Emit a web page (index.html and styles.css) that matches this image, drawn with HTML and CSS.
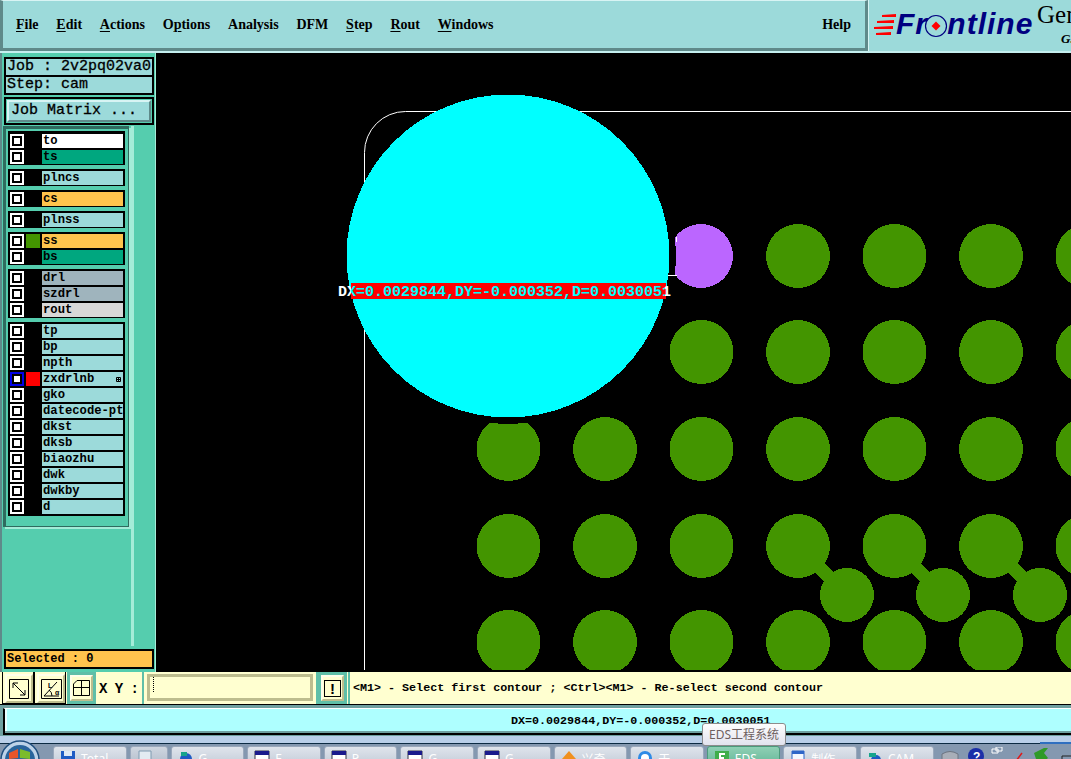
FILE: index.html
```html
<!DOCTYPE html>
<html lang="en">
<head>
<meta charset="utf-8">
<title>Frontline Genesis</title>
<link rel="stylesheet" href="styles.css">
</head>
<body>
<div class="app">
  <header class="topbar">
    <nav class="menubar">
      <span><u>F</u>ile</span><span><u>E</u>dit</span><span><u>A</u>ctions</span><span>O<u>p</u>tions</span><span>Analysis</span><span>DFM</span><span><u>S</u>tep</span><span><u>R</u>out</span><span><u>W</u>indows</span>
      <span class="help">Help</span>
    </nav>
    <div class="logo">
      <svg class="logo-lines" width="22" height="24" viewBox="0 0 22 24"><path d="M8 2 22 1V4L8 4ZM3 8 20 7V10L3 10ZM0 14 19 13V16L0 16ZM2 20 17 19V22L2 22Z" fill="#f00"/></svg>
      <span class="logo-word">Frontline</span>
      <svg class="logo-mark" width="26" height="26" viewBox="0 0 26 26"><circle cx="13" cy="13" r="10.5" fill="#9cdada" stroke="#000080" stroke-width="1.200"/><path d="M13 8.500 17.500 13 13 17.500 8.500 13Z" fill="#f00"/></svg>
      <div class="logo-side"><span class="gen">Gen</span><span class="gsub">G.</span></div>
    </div>
  </header>

  <main class="main">
    <aside class="sidebar">
      <div class="info">Job : 2v2pq02va0</div>
      <div class="info step">Step: cam</div>
      <div class="matrix"><div class="matrix-btn">Job Matrix ...</div></div>
      <div class="layers-area">
        <div class="layer-panel">
          <div class="group first">
            <div class="row"><i class="chk"><b></b></i><i class="sw"></i><span class="name c-white">to</span></div>
            <div class="row"><i class="chk"><b></b></i><i class="sw"></i><span class="name c-green">ts</span></div>
          </div>
          <div class="group single"><div class="row"><i class="chk"><b></b></i><i class="sw"></i><span class="name">plncs</span></div></div>
          <div class="group single"><div class="row"><i class="chk"><b></b></i><i class="sw"></i><span class="name c-orange">cs</span></div></div>
          <div class="group single"><div class="row"><i class="chk"><b></b></i><i class="sw"></i><span class="name">plnss</span></div></div>
          <div class="group single">
            <div class="row"><i class="chk"><b></b></i><i class="sw sw-green"></i><span class="name c-orange">ss</span></div>
            <div class="row"><i class="chk"><b></b></i><i class="sw"></i><span class="name c-green">bs</span></div>
          </div>
          <div class="group single">
            <div class="row"><i class="chk"><b></b></i><i class="sw"></i><span class="name c-slate">drl</span></div>
            <div class="row"><i class="chk"><b></b></i><i class="sw"></i><span class="name c-slate">szdrl</span></div>
            <div class="row"><i class="chk"><b></b></i><i class="sw"></i><span class="name c-grey">rout</span></div>
          </div>
          <div class="group">
            <div class="row"><i class="chk"><b></b></i><i class="sw"></i><span class="name">tp</span></div>
            <div class="row"><i class="chk"><b></b></i><i class="sw"></i><span class="name">bp</span></div>
            <div class="row"><i class="chk"><b></b></i><i class="sw"></i><span class="name">npth</span></div>
            <div class="row"><i class="chk chk-on"><b></b></i><i class="sw sw-red"></i><span class="name">zxdrlnb<svg class="attr" width="5" height="5" viewBox="0 0 5 5"><path d="M.5.500H4.500V4.500H.5ZM2.500.500V4.500M.5 2.500H4.500" fill="none" stroke="#000" stroke-width="1"/></svg></span></div>
            <div class="row"><i class="chk"><b></b></i><i class="sw"></i><span class="name">gko</span></div>
            <div class="row"><i class="chk"><b></b></i><i class="sw"></i><span class="name">datecode-pte</span></div>
            <div class="row"><i class="chk"><b></b></i><i class="sw"></i><span class="name">dkst</span></div>
            <div class="row"><i class="chk"><b></b></i><i class="sw"></i><span class="name">dksb</span></div>
            <div class="row"><i class="chk"><b></b></i><i class="sw"></i><span class="name">biaozhu</span></div>
            <div class="row"><i class="chk"><b></b></i><i class="sw"></i><span class="name">dwk</span></div>
            <div class="row"><i class="chk"><b></b></i><i class="sw"></i><span class="name">dwkby</span></div>
            <div class="row"><i class="chk"><b></b></i><i class="sw"></i><span class="name">d</span></div>
          </div>
        </div>
        <div class="trough"></div>
      </div>
      <div class="selected">Selected : 0</div>
    </aside>

    <svg class="canvas" width="915" height="618" viewBox="156 53 915 618" shape-rendering="crispEdges">
      <defs>
        <linearGradient id="readout" gradientUnits="userSpaceOnUse" x1="338" y1="0" x2="670" y2="0">
          <stop offset="0.039" stop-color="#fff"/><stop offset="0.04" stop-color="#0ff"/><stop offset="0.985" stop-color="#0ff"/><stop offset="0.986" stop-color="#fff"/>
        </linearGradient>
      </defs>
      <g fill="#439500" stroke="#439500">
        <path d="M798 546 847 595M894 546 943 595M991 546 1040 595" stroke-width="14" fill="none"/>
      </g>
      <g fill="#439500">
        <circle cx="798" cy="256" r="32"/><circle cx="894.500" cy="256" r="32"/><circle cx="991" cy="256" r="32"/><circle cx="1087.500" cy="256" r="32"/>
        <circle cx="701.500" cy="352" r="32"/><circle cx="798" cy="352" r="32"/><circle cx="894.500" cy="352" r="32"/><circle cx="991" cy="352" r="32"/><circle cx="1087.500" cy="352" r="32"/>
        <circle cx="508.500" cy="449" r="32"/><circle cx="605" cy="449" r="32"/><circle cx="701.500" cy="449" r="32"/><circle cx="798" cy="449" r="32"/><circle cx="894.500" cy="449" r="32"/><circle cx="991" cy="449" r="32"/><circle cx="1087.500" cy="449" r="32"/>
        <circle cx="508.500" cy="546" r="32"/><circle cx="605" cy="546" r="32"/><circle cx="701.500" cy="546" r="32"/><circle cx="798" cy="546" r="32"/><circle cx="894.500" cy="546" r="32"/><circle cx="991" cy="546" r="32"/><circle cx="1087.500" cy="546" r="32"/>
        <circle cx="508.500" cy="642" r="32"/><circle cx="605" cy="642" r="32"/><circle cx="701.500" cy="642" r="32"/><circle cx="798" cy="642" r="32"/><circle cx="894.500" cy="642" r="32"/><circle cx="991" cy="642" r="32"/><circle cx="1087.500" cy="642" r="32"/>
        <circle cx="847" cy="595" r="27"/><circle cx="943" cy="595" r="27"/><circle cx="1040" cy="595" r="27"/>
      </g>
      <circle cx="701" cy="256" r="32" fill="#bb66ff"/>
      <circle cx="508" cy="256" r="168" fill="#000"/>
      <path d="M1071 111.500H405.500A41 41 0 0 0 364.500 152.500V671" fill="none" stroke="#fff" stroke-width="1" shape-rendering="auto"/>
      <path d="M668 275.500H677M676.500 237V242" stroke="#fff" stroke-width="1"/>
      <circle cx="508" cy="256" r="161.500" fill="#0ff"/>
      <rect x="351" y="283" width="315" height="16" fill="#f00"/>
      <text class="readout" x="338" y="296" fill="url(#readout)" shape-rendering="auto">DX=0.0029844,DY=-0.000352,D=0.0030051</text>
      <rect x="156" y="670" width="915" height="2" fill="#000"/>
    </svg>
  </main>

  <section class="toolbar">
    <div class="tool plain"><div class="bevel">
      <svg width="20" height="20" viewBox="0 0 20 20"><path d="M.5.500H19.500V19.500H.5ZM4 4 16 16M4 4H9M4 4V9M16 16H11M16 16V11" fill="none" stroke="#000"/></svg>
    </div></div>
    <div class="tool plain"><div class="bevel">
      <svg width="21" height="20" viewBox="0 0 21 20"><path d="M.5.500H20.500V19.500H.5ZM16 3 3 17H18M11 17Q11 13 8 11" fill="none" stroke="#000"/><text class="glyph" x="14" y="16">α</text><text class="glyph" x="7" y="9">L</text></svg>
    </div></div>
    <div class="tool framed"><div class="bevel">
      <svg width="17" height="16" viewBox="0 0 17 16"><path d="M.5 15.500V4L4 .5H16.500V15.500ZM.5 7.500H16.500M8.500.5V15.500" fill="none" stroke="#000"/></svg>
    </div></div>
    <label class="xy-label">X Y :</label>
    <div class="xy-field"><div class="xy-inner"><span class="caret"></span></div></div>
    <div class="tool framed warn"><div class="bevel"><span class="bang">!</span></div></div>
    <div class="prompt">&lt;M1&gt; - Select first contour ; &lt;Ctrl&gt;&lt;M1&gt; - Re-select second contour</div>
  </section>

  <section class="status"><div class="status-inner">DX=0.0029844,DY=-0.000352,D=0.0030051</div></section>
  <div class="glass"></div>

  <footer class="taskbar">
    <div class="task"><svg class="ticon" width="16" height="16" viewBox="0 0 16 16"><path d="M1 1H15V15H1Z" fill="#1f5bc4"/><path d="M4 1H12V6H4Z" fill="#dfe8f5"/></svg><span>Total</span></div>
    <div class="task narrow"><svg class="ticon" width="16" height="16" viewBox="0 0 16 16"><path d="M2 1H14V15H2Z" fill="#e3ebf2" stroke="#7f9ab0"/></svg></div>
    <div class="task"><svg class="ticon" width="16" height="16" viewBox="0 0 16 16"><circle cx="8" cy="9" r="6" fill="#1f5bc4"/><path d="M3 2H9V6H3Z" fill="#17a58c"/></svg><span>G</span></div>
    <div class="task"><svg class="ticon" width="16" height="16" viewBox="0 0 16 16"><path d="M1 1H15V15H1Z" fill="#fff" stroke="#334"/><path d="M1 1H15V5H1Z" fill="#1a1a8c"/></svg><span>F</span></div>
    <div class="task"><svg class="ticon" width="16" height="16" viewBox="0 0 16 16"><path d="M1 1H15V15H1Z" fill="#fff" stroke="#334"/><path d="M1 1H15V5H1Z" fill="#1a1a8c"/></svg><span>P</span></div>
    <div class="task"><svg class="ticon" width="16" height="16" viewBox="0 0 16 16"><path d="M1 1H15V15H1Z" fill="#fff" stroke="#334"/><path d="M1 1H15V5H1Z" fill="#1a1a8c"/></svg><span>G</span></div>
    <div class="task"><svg class="ticon" width="16" height="16" viewBox="0 0 16 16"><path d="M1 1H15V15H1Z" fill="#fff" stroke="#334"/><path d="M1 1H15V5H1Z" fill="#1a1a8c"/></svg><span>G</span></div>
    <div class="task"><svg class="ticon" width="16" height="16" viewBox="0 0 16 16"><path d="M8 1 15 9V15H1V9Z" fill="#f0901e"/></svg><span>兴奇</span></div>
    <div class="task"><svg class="ticon" width="16" height="16" viewBox="0 0 16 16"><circle cx="8" cy="8" r="7" fill="#2f8ae6"/><circle cx="8" cy="8" r="4" fill="#fff"/></svg><span>于</span></div>
    <div class="task active"><svg class="ticon" width="16" height="16" viewBox="0 0 16 16"><path d="M1 1H15V15H1Z" fill="#3fae4a"/><path d="M5 3H11V5H7V7H10V9H7V13H5Z" fill="#fff"/></svg><span>EDS</span></div>
    <div class="task"><svg class="ticon" width="16" height="16" viewBox="0 0 16 16"><path d="M2 1H14V15H2Z" fill="#f4f8ff" stroke="#2f66c8"/><path d="M2 1H14V4H2Z" fill="#2f66c8"/></svg><span>制作</span></div>
    <div class="task"><svg class="ticon" width="16" height="16" viewBox="0 0 16 16"><circle cx="9" cy="10" r="5" fill="#1f5bc4"/><path d="M2 3H9V7H2Z" fill="#17a58c"/></svg><span>CAM</span></div>
    <div class="tray">
      <svg width="138" height="16" viewBox="0 0 138 16"><path d="M8 7Q16 2 24 7V16H8Z" fill="#a8aeb8" stroke="#6c7480"/><circle cx="42" cy="9" r="8" fill="#1b2fa8"/><text class="tray-q" x="39" y="14">?</text><path d="M58 2H64V6H58ZM62 0H68V4H62Z" fill="none" stroke="#fff"/><path d="M82 14 88 6" stroke="#e01818" stroke-width="1.500"/><path d="M100 6 110 1 114 1 110 6 114 11 108 16 102 12Z" fill="#2f9a28"/><path d="M128 9H138V16H128Z" fill="none" stroke="#222"/></svg>
    </div>
  </footer>

  <svg class="orb" width="40" height="20" viewBox="0 0 40 20"><circle cx="20" cy="21" r="19" fill="#bcd2e8" stroke="#1f4f7f" stroke-width="1.500"/><circle cx="20" cy="21" r="15" fill="#28649c"/><path d="M9 14 18 10V19L9 20Z" fill="#e8552a"/><path d="M20 10 30 13V20L20 19Z" fill="#7cbc2c"/></svg>
  <div class="taskstrip"></div>
  <div class="tooltip">EDS工程系统</div>
</div>
</body>
</html>
```

FILE: styles.css
```css
* { box-sizing: border-box; }
html, body { margin: 0; padding: 0; height: 100%; overflow: hidden; background: #000; }
.app {
  position: relative;
  width: 1071px;
  height: 759px;
  overflow: hidden;
  display: flex;
  flex-direction: column;
  font-family: "Liberation Mono", monospace;
  font-weight: bold;
  color: #000;
}

/* top bar */
.topbar { height: 53px; display: flex; flex: none; background: #c4eeee; padding-bottom: 2px; }
.menubar {
  width: 868px;
  display: flex;
  align-items: center;
  gap: 17.800px;
  padding: 0 14px 0 13px;
  background: #9cdada;
  border-top: 1px solid #d8f4f4;
  border-left: 3px solid #5f8a8a;
  border-bottom: 3px solid #5f8a8a;
  border-right: 3px solid #5f8a8a;
  font-family: "Liberation Serif", serif;
  font-size: 14px;
}
.menubar u { text-decoration-thickness: 1px; text-underline-offset: 2px; }
.help { margin-left: auto; }
.logo {
  position: relative;
  flex: 1;
  display: flex;
  align-items: flex-start;
  background: #9cdada;
  border-left: 1px solid #d8f4f4;
  overflow: hidden;
}
.logo-lines { flex: none; margin: 13px 0 0 5px; }
.logo-word {
  margin: 7px 0 0 0;
  font-family: "Liberation Sans", sans-serif;
  font-style: italic;
  font-size: 30px;
  line-height: 34px;
  letter-spacing: 1px;
  color: #000080;
}
.logo-mark { position: absolute; left: 54px; top: 13px; }
.logo-side {
  position: absolute;
  left: 168px;
  top: 1px;
  font-family: "Liberation Serif", serif;
  display: flex;
  flex-direction: column;
}
.gen { font-size: 25px; line-height: 28px; font-weight: normal; }
.gsub { font-size: 13px; line-height: 14px; font-style: italic; margin: 3px 0 0 24px; }

/* main area */
.main { flex: none; height: 619px; display: flex; }
.sidebar {
  width: 156px;
  flex: none;
  display: flex;
  flex-direction: column;
  padding: 4px 1px 3px 2px;
  background: #55cdae;
  border-left: 2px solid #5f8a8a;
  border-right: 1px solid #a4ecd8;
}
.info {
  height: 19px;
  border: 2px solid #000;
  border-bottom-width: 1px;
  background: #9cdada;
  font-size: 15px;
  line-height: 15px;
  padding-left: 1px;
  font-weight: normal;
  -webkit-text-stroke: .3px #000;
  white-space: nowrap;
}
.step { border-top-width: 1px; border-bottom-width: 2px; }
.matrix { margin-top: 2px; height: 28px; border: 2px solid #000; padding: 1px; }
.matrix-btn {
  height: 22px;
  background: #9cdada;
  border: 2px solid #5f8a8a;
  border-top-color: #d8f4f4;
  border-left-color: #d8f4f4;
  font-size: 15px;
  font-weight: normal;
  -webkit-text-stroke: .3px #000;
  line-height: 18px;
  padding-left: 2px;
  white-space: nowrap;
}
.layers-area { flex: 1; display: flex; margin: 1px 0 0 -1px; min-height: 0; }
.layer-panel {
  width: 126px;
  height: 401px;
  flex: none;
  display: flex;
  flex-direction: column;
  gap: 4px;
  padding: 2px 0 0 2px;
  border: 3px solid #2f6b5f;
  border-right-width: 1px;
  border-bottom-width: 1px;
  box-shadow: 2px 2px 0 #a4ecd8;
}
.trough { flex: 1; border-left: 3px solid #a4ecd8; margin-left: 2px; }
.group {
  width: 117px;
  flex: none;
  display: flex;
  flex-direction: column;
  gap: 2px;
  padding: 2px;
  background: #000;
}
.group.first { padding: 3px 2px 1px; }
.group.single { padding-bottom: 1px; }
.row { display: flex; gap: 2px; height: 14px; flex: none; }
.chk { width: 14px; height: 14px; flex: none; padding: 2px; background: #fff; display: block; }
.chk b { display: block; width: 10px; height: 10px; border: 2px solid #000; background: #fff; }
.chk-on { background: #0000e6; }
.sw { width: 14px; height: 14px; flex: none; display: block; background: #000; }
.sw-green { background: #439500; }
.sw-red { background: #f00; }
.name {
  position: relative;
  width: 81px;
  height: 14px;
  flex: none;
  overflow: hidden;
  white-space: nowrap;
  background: #9cdada;
  font-size: 12.200px;
  line-height: 14px;
  padding-left: 1px;
}
.attr { position: absolute; right: 2px; top: 5px; }
.c-white { background: #fff; }
.c-green { background: #00a77f; }
.c-orange { background: #ffc44d; }
.c-slate { background: #9fb4bd; }
.c-grey { background: #d8d8d8; }
.selected {
  height: 20px;
  border: 2px solid #000;
  background: #ffc44d;
  font-size: 12px;
  line-height: 16px;
  padding-left: 1px;
  margin-top: 3px;
}
.canvas { flex: none; display: block; background: #000; }
.readout { font-family: "Liberation Mono", monospace; font-size: 15px; font-weight: bold; }

/* bottom toolbar */
.toolbar { flex: none; height: 33px; display: flex; background: #ffffd0; font-size: 11.700px; border-bottom: 1px solid #000; }
.tool { flex: none; padding: 1px; display: flex; }
.plain { width: 32px; margin-left: 2px; border: 1px solid #000; border-top: 0; padding: 2px 0 0 2px; }
.plain + .plain { margin-left: 0; }
.framed { width: 29px; padding: 3px; background: #5fbfa8; margin-left: 1px; }
.bevel {
  flex: 1;
  display: flex;
  align-items: center;
  justify-content: center;
  background: #ffffd0;
  border: 2px solid #bdbd8e;
  border-top-color: #ffffea;
  border-left-color: #ffffea;
}
.glyph { font-family: "Liberation Sans", sans-serif; font-size: 7px; font-weight: bold; }
.xy-label { flex: none; width: 48px; padding: 9px 0 0 3px; font-size: 14px; letter-spacing: -.5px; border-right: 2px solid #5fbfa8; }
.xy-field { flex: none; width: 174px; padding: 2px 3px; border-right: 2px solid #5fbfa8; }
.xy-inner { height: 27px; border: 3px solid #bdbd8e; position: relative; background: #ffffd0; }
.caret { position: absolute; left: 3px; top: 0; height: 15px; border-left: 1px dotted #000; }
.warn { margin-left: 0; }
.bang { width: 17px; height: 17px; border: 1px solid #000; font: bold 15px/15px "Liberation Sans", sans-serif; text-align: center; }
.prompt {
  flex: 1;
  margin-left: 1px;
  border-left: 2px solid #5fbfa8;
  padding: 9px 0 0 3px;
  white-space: nowrap;
  overflow: hidden;
}

/* status line */
.status { flex: none; height: 31px; padding: 3px 0 1px 3px; background: #6fa0a0; }
.status-inner {
  height: 27px;
  padding: 1px 0 0 0;
  border: 2px solid #000;
  border-right: 0;
  border-top: 1px solid #fff;
  background: #aeffff;
  box-shadow: inset 0 -2px 0 #6fa0a0, inset 2px 0 0 #e8ffff;
  font-size: 11.700px;
  line-height: 22px;
  text-indent: 506px;
  white-space: nowrap;
}
.glass { flex: none; height: 7px; background: #b9cfe9; }

/* taskbar */
.taskbar {
  position: relative;
  flex: 1;
  display: flex;
  gap: 3px;
  padding: 2px 0 0 53px;
  background: #8498b0;
  border-top: 1px solid #0b2a42;
  font-family: "Noto Sans", "Noto Sans CJK SC", sans-serif;
  font-size: 12px;
  font-weight: normal;
  color: #fff;
}
.task {
  width: 73.600px;
  height: 30px;
  flex: none;
  display: flex;
  gap: 5px;
  padding: 3px 0 0 6px;
  border: 1px solid #9aa8bc;
  border-radius: 3px 3px 0 0;
  background: linear-gradient(#dfe4ec, #b4bfcd);
  white-space: nowrap;
}
.narrow { width: 38px; background: linear-gradient(#cfd6e0, #a4b0c0); }
.active { background: linear-gradient(#8fd0b4, #4fa98a); border-color: #4b9a7c; }
.ticon { flex: none; }
.tray { flex: 1; margin-left: -3px; padding-top: 1px; }
.tray svg { display: block; }
.tray-q { font-family: "Liberation Sans", sans-serif; font-size: 12px; font-weight: bold; fill: #fff; }
.orb { position: absolute; left: 0; bottom: 0; }
.taskstrip { position: absolute; right: 0; top: 742px; width: 31px; height: 2px; background: #2f6fc0; }
.tooltip {
  position: absolute;
  left: 702px;
  top: 723px;
  width: 84px;
  height: 23px;
  border: 1px solid #8c8c8c;
  border-radius: 3px;
  background: linear-gradient(#fdfdfd, #e2e3ee);
  font-family: "Noto Sans", "Noto Sans CJK SC", sans-serif;
  font-size: 12px;
  font-weight: normal;
  line-height: 21px;
  text-align: center;
  color: #6e5f5f;
  white-space: nowrap;
}
```
